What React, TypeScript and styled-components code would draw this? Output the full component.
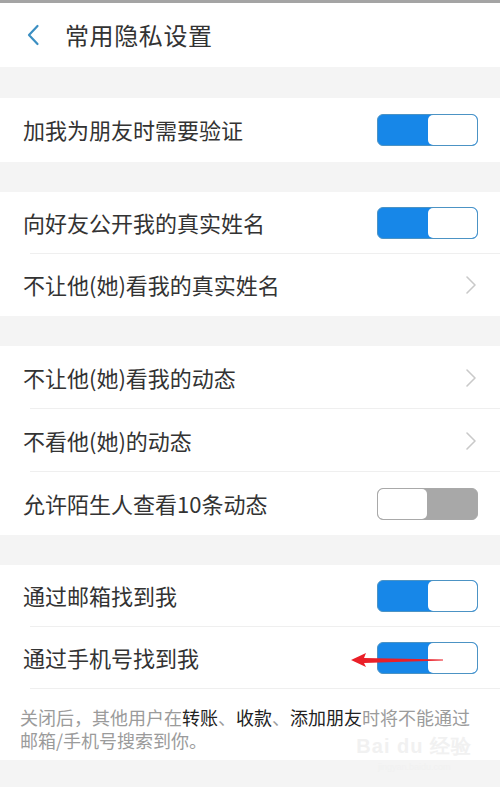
import styled, { createGlobalStyle } from 'styled-components';

const GlobalStyle = createGlobalStyle`
  html, body {
    margin: 0;
    padding: 0;
    background: #f4f4f4;
  }
  body {
    font-family: "Noto Sans CJK SC", "Noto Sans", sans-serif;
    color: #333333;
  }
`;

const Page = styled.div`
  position: relative;
  width: 500px;
  height: 787px;
  background: #f4f4f4;
  overflow: hidden;
`;

const TopStrip = styled.div`
  height: 3px;
  background: #a4a4a4;
`;

const Header = styled.div`
  height: 64px;
  background: #ffffff;
  display: flex;
  align-items: center;
  padding-left: 26px;
  gap: 25px;
`;

const Title = styled.div`
  font-size: 24px;
  color: #333333;
  line-height: 1;
  letter-spacing: 0.6px;
`;

const Group = styled.div<{ $gap: number }>`
  margin-top: ${p => p.$gap}px;
  background: #ffffff;
`;

const Row = styled.div<{ $h?: number; $divider?: boolean }>`
  position: relative;
  height: ${p => p.$h ?? 62}px;
  display: flex;
  align-items: center;
  justify-content: space-between;
  padding: 0 22px 0 23px;
  ${p =>
    p.$divider &&
    `
    &::after {
      content: '';
      position: absolute;
      left: 30px;
      right: 0;
      bottom: 0;
      height: 1px;
      background: #efefef;
    }
  `}
`;

const Label = styled.span`
  font-size: 22px;
  color: #333333;
  line-height: 1;
  margin-top: -2px;
`;

const Switch = styled.div<{ $on: boolean }>`
  width: 101px;
  height: 32px;
  box-sizing: border-box;
  border-radius: 6px;
  border: 1.5px solid ${p => (p.$on ? '#4c93c4' : '#a9a9a9')};
  background: ${p => (p.$on ? '#1787e8' : '#a8a8a8')};
  display: flex;
  justify-content: ${p => (p.$on ? 'flex-end' : 'flex-start')};
  overflow: hidden;
`;

const Knob = styled.div`
  width: 49px;
  height: 100%;
  background: #ffffff;
  border-radius: 5px;
`;

const Footer = styled.div`
  background: #ffffff;
  height: 71px;
  box-sizing: border-box;
  padding: 17px 20px 0 20px;
  font-size: 18px;
  line-height: 23px;
  color: #9b9b9b;
`;

const Strong = styled.span`
  color: #222222;
`;

const Arrow = styled.svg`
  position: absolute;
  left: 349px;
  top: 651px;
`;

const Watermark = styled.div`
  position: absolute;
  right: 28px;
  top: 733px;
  text-align: center;
  color: #f1f1f1;
  font-family: "Liberation Sans", sans-serif;
`;

const WmMain = styled.div`
  font-size: 20px;
  font-weight: bold;
  letter-spacing: 1px;
`;

const WmSub = styled.div`
  font-size: 9px;
  margin-top: 2px;
`;

function BackIcon() {
  return (
    <svg width="14" height="22" viewBox="0 0 14 22">
      <path d="M11.5 2 L3 11 L11.5 20" fill="none" stroke="#3b8fc2" strokeWidth="2.2" strokeLinecap="round" strokeLinejoin="round" />
    </svg>
  );
}

function Chevron() {
  return (
    <svg width="12" height="20" viewBox="0 0 12 20" style={{ marginRight: 1 }}>
      <path d="M2 2 L10 10 L2 18" fill="none" stroke="#c9c9c9" strokeWidth="1.6" strokeLinecap="round" strokeLinejoin="round" />
    </svg>
  );
}

function Toggle({ on }: { on: boolean }) {
  return (
    <Switch $on={on}>
      <Knob />
    </Switch>
  );
}

export default function App() {
  return (
    <>
      <GlobalStyle />
      <Page>
        <TopStrip />
        <Header>
          <BackIcon />
          <Title>常用隐私设置</Title>
        </Header>

        <Group $gap={31}>
          <Row $h={64}>
            <Label>加我为朋友时需要验证</Label>
            <Toggle on />
          </Row>
        </Group>

        <Group $gap={30}>
          <Row $divider>
            <Label>向好友公开我的真实姓名</Label>
            <Toggle on />
          </Row>
          <Row>
            <Label>不让他(她)看我的真实姓名</Label>
            <Chevron />
          </Row>
        </Group>

        <Group $gap={30}>
          <Row $h={63} $divider>
            <Label>不让他(她)看我的动态</Label>
            <Chevron />
          </Row>
          <Row $h={63} $divider>
            <Label>不看他(她)的动态</Label>
            <Chevron />
          </Row>
          <Row $h={63}>
            <Label>允许陌生人查看10条动态</Label>
            <Toggle on={false} />
          </Row>
        </Group>

        <Group $gap={30}>
          <Row $divider>
            <Label>通过邮箱找到我</Label>
            <Toggle on />
          </Row>
          <Row $divider>
            <Label>通过手机号找到我</Label>
            <Toggle on />
          </Row>
        </Group>

        <Footer>
          关闭后，其他用户在<Strong>转账</Strong>、<Strong>收款</Strong>、<Strong>添加朋友</Strong>时将不能通过
          邮箱/手机号搜索到你。
        </Footer>

        <Arrow width="96" height="18" viewBox="0 0 96 18">
          <path d="M2 9 L17 2 L15 7 L94 8.5 L94 9.5 L15 12 L17 16 Z" fill="#ea1f28" />
        </Arrow>

        <Watermark>
          <WmMain>Bai du 经验</WmMain>
          <WmSub>jingyan.baidu.com</WmSub>
        </Watermark>
      </Page>
    </>
  );
}
